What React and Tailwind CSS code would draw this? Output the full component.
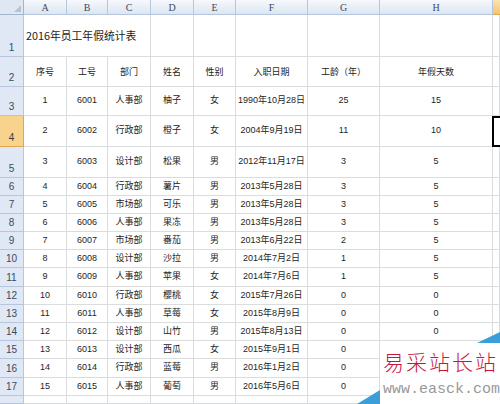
import React from 'react';

const colLetters = ['A', 'B', 'C', 'D', 'E', 'F', 'G', 'H', 'I'];

const headers = ['序号', '工号', '部门', '姓名', '性别', '入职日期', '工龄（年）', '年假天数'];

// last column of rows 13-15 sits under the watermark, so left blank
const rows = [
  [1, 6001, '人事部', '柚子', '女', '1990年10月28日', 25, 15],
  [2, 6002, '行政部', '橙子', '女', '2004年9月19日', 11, 10],
  [3, 6003, '设计部', '松果', '男', '2012年11月17日', 3, 5],
  [4, 6004, '行政部', '薯片', '男', '2013年5月28日', 3, 5],
  [5, 6005, '市场部', '可乐', '男', '2013年5月28日', 3, 5],
  [6, 6006, '人事部', '果冻', '男', '2013年5月28日', 3, 5],
  [7, 6007, '市场部', '番茄', '男', '2013年6月22日', 2, 5],
  [8, 6008, '设计部', '沙拉', '男', '2014年7月2日', 1, 5],
  [9, 6009, '人事部', '苹果', '女', '2014年7月6日', 1, 5],
  [10, 6010, '行政部', '樱桃', '女', '2015年7月26日', 0, 0],
  [11, 6011, '人事部', '草莓', '女', '2015年8月9日', 0, 0],
  [12, 6012, '设计部', '山竹', '男', '2015年8月13日', 0, 0],
  [13, 6013, '设计部', '西瓜', '女', '2015年9月1日', 0, ''],
  [14, 6014, '行政部', '蓝莓', '男', '2016年1月2日', 0, ''],
  [15, 6015, '人事部', '葡萄', '男', '2016年5月6日', 0, ''],
];

const cell = 'flex items-center justify-center border-r border-b border-[#dadcdd] whitespace-nowrap overflow-hidden';
const rowHead = 'flex items-end justify-center pb-[1px] border-r border-b border-[#b5c6dd] bg-[#dfe8f4] text-[#3b4a5e] text-[10px]';

const RowHeader = ({ n, active }) => (
  <div className={active
    ? 'flex items-end justify-center pb-[1px] border-r border-b border-[#e0a84a] bg-[#f8d38e] text-[#3b3b3b] text-[10px]'
    : rowHead}>
    {n}
  </div>
);

export default function App() {
  return (
    <div className="relative w-[500px] h-[404px] overflow-hidden bg-white text-[9px] text-[#1e1e1e] font-['Liberation_Sans','Noto_Sans_CJK_SC',sans-serif]">
      <div className="grid grid-cols-[24px_43px_41px_43px_43px_42px_72px_72px_113px_7px] grid-rows-[15px_42px_30px_29px_31px_31px_18px_18px_18px_18px_18px_19px_18px_18px_18px_18px_19px_18px_8px]">
        {/* column headers */}
        <div className="relative border-r border-b border-[#9eb6ce] bg-[#dfe7f2]">
          <div className="absolute right-[2px] bottom-[2px] w-0 h-0 border-l-[7px] border-l-transparent border-b-[7px] border-b-[#b9c3cf]" />
        </div>
        {colLetters.map((c) => (
          <div
            key={c}
            className={c === 'I'
              ? 'border-b border-[#e0a84a] bg-gradient-to-b from-[#fbe3b3] to-[#f4c46c]'
              : "flex items-center justify-center border-r border-b border-[#b5c6dd] bg-gradient-to-b from-[#f6f9fd] to-[#dce5f1] text-[#3b4a5e] font-['Liberation_Serif',serif] text-[10px]"}
          >
            {c === 'I' ? '' : c}
          </div>
        ))}

        {/* row 1 */}
        <RowHeader n={1} />
        <div className="col-span-3 flex items-center pl-[2px] border-r border-b border-[#dadcdd] whitespace-nowrap text-[10.8px] font-['Noto_Sans_CJK_SC',sans-serif]">
          2016年员工年假统计表
        </div>
        <div className={cell} />
        <div className={cell} />
        <div className={cell} />
        <div className={cell} />
        <div className={cell} />
        <div className={cell} />

        {/* row 2 */}
        <RowHeader n={2} />
        {headers.map((h) => (
          <div key={h} className={cell + " font-['Noto_Sans_CJK_SC',sans-serif]"}>{h}</div>
        ))}
        <div className={cell} />

        {/* data rows */}
        {rows.map((r, i) => (
          <React.Fragment key={r[0]}>
            <RowHeader n={i + 3} active={i === 1} />
            {r.map((v, j) => (
              <div key={j} className={cell}>{v}</div>
            ))}
            <div className={i === 1 ? 'border-l-2 border-t-2 border-b-2 border-black -ml-[1px]' : cell} />
          </React.Fragment>
        ))}

        {/* partial row 18 */}
        <div className={rowHead} />
        {colLetters.map((c) => (
          <div key={c} className={cell} />
        ))}
      </div>

      {/* watermark */}
      <div className="absolute left-[380px] top-[343px] w-[120px] h-[61px] bg-white" />
      <svg className="absolute left-0 top-0 pointer-events-none" width="500" height="404">
        <polygon points="477,343 500,332 500,343" fill="#3a9fd9" />
        <polygon points="357,404 380,390 380,404" fill="#3a9fd9" />
      </svg>
      <div className="absolute left-[383px] top-[348px] text-[21px] leading-[26px] tracking-[2px] text-[#c8143c] font-['Noto_Sans_CJK_SC',serif] font-light whitespace-nowrap">
        易采站长站
      </div>
      <div className="absolute left-[383px] top-[382px] text-[15px] leading-[16px] text-[#999999] font-['Liberation_Mono',monospace] whitespace-nowrap">
        www.easck.com
      </div>
    </div>
  );
}
